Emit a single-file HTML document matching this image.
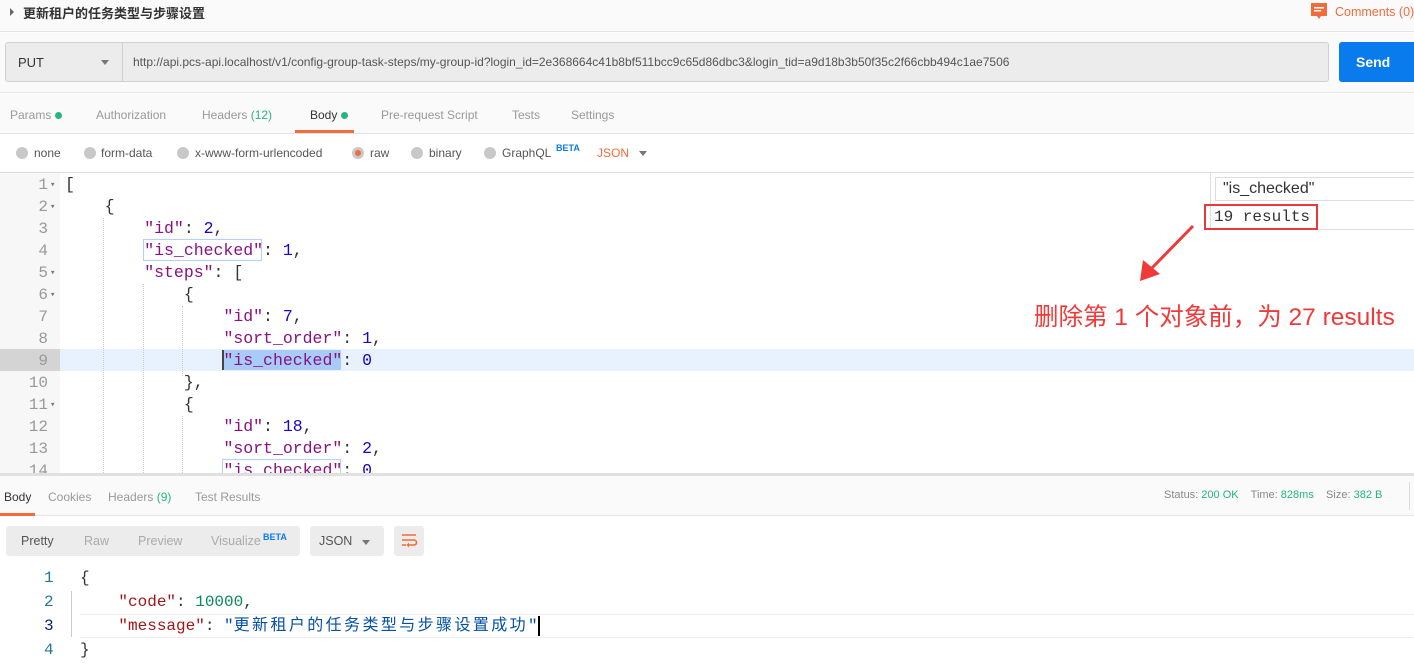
<!DOCTYPE html>
<html><head><meta charset="utf-8"><style>
*{margin:0;padding:0;box-sizing:border-box}
body{width:1414px;height:665px;overflow:hidden;background:#fff;font-family:"Liberation Sans","Noto Sans CJK SC",sans-serif;position:relative;color:#333}
.abs{position:absolute}
.mono{font-family:"Liberation Mono","DejaVu Sans Mono","Noto Sans CJK SC",monospace}
.tab{position:absolute;top:108px;font-size:12px;color:#999}
.radio{position:absolute;top:147px;width:12px;height:12px;border-radius:50%;background:#c8c8c8}
.rl{position:absolute;top:146px;font-size:12px;color:#555}
.ln{position:absolute;left:0;width:48px;text-align:right;font-size:16px;color:#999}
.cl{position:absolute;font-size:16.5px;white-space:pre;color:#333}
.k{color:#881280}.n{color:#1c00cf}
.guide{position:absolute;border-left:1px dotted #ccc}
</style></head><body>
<!-- top bar -->
<div class="abs" style="left:0;top:0;width:1414px;height:32px;background:#fafafa;border-bottom:1px solid #e4e4e4"></div>
<div class="abs" style="left:10px;top:8px;width:0;height:0;border-left:4px solid #666;border-top:4px solid transparent;border-bottom:4px solid transparent"></div>
<div class="abs" style="left:23px;top:3px;font-size:13px;font-weight:bold;color:#333">更新租户的任务类型与步骤设置</div>
<svg class="abs" style="left:1311px;top:3px" width="16" height="17"><rect x="0" y="0" width="16" height="13" fill="#f26b3a"/><polygon points="6,13 10,13 8,16" fill="#f26b3a"/><rect x="3" y="4" width="10" height="1.5" fill="#fff"/><rect x="3" y="7" width="7" height="1.5" fill="#fff"/></svg>
<div class="abs" style="left:1335px;top:5px;font-size:12.5px;color:#f26b3a;white-space:nowrap">Comments (0)</div>
<!-- request row -->
<div class="abs" style="left:0;top:33px;width:1414px;height:60px;background:#fafafa;border-bottom:1px solid #e4e4e4"></div>
<div class="abs" style="left:5px;top:42px;width:1324px;height:40px;background:#ececec;border:1px solid #d0d0d0;border-radius:3px"></div>
<div class="abs" style="left:122px;top:43px;width:1px;height:38px;background:#d0d0d0"></div>
<div class="abs" style="left:18px;top:55px;font-size:13px;color:#333">PUT</div>
<div class="abs" style="left:101px;top:60px;border-top:5px solid #777;border-left:4px solid transparent;border-right:4px solid transparent"></div>
<div class="abs" style="left:133px;top:55px;font-size:12px;color:#555;white-space:nowrap">http://api.pcs-api.localhost/v1/config-group-task-steps/my-group-id?login_id=2e368664c41b8bf511bcc9c65d86dbc3&amp;login_tid=a9d18b3b50f35c2f66cbb494c1ae7506</div>
<div class="abs" style="left:1339px;top:42px;width:80px;height:40px;background:#097bed;border-radius:3px 0 0 3px;color:#fff;font-size:14px;font-weight:bold;line-height:40px;padding-left:17px">Send</div>
<!-- tabs -->
<div class="abs" style="left:0;top:94px;width:1414px;height:40px;background:#fafafa;border-bottom:1px solid #e4e4e4"></div>
<div class="tab" style="left:10px">Params <span style="display:inline-block;width:7px;height:7px;border-radius:50%;background:#26b47f"></span></div>
<div class="tab" style="left:96px">Authorization</div>
<div class="tab" style="left:202px">Headers <span style="color:#26b47f">(12)</span></div>
<div class="tab" style="left:310px;color:#333">Body <span style="display:inline-block;width:7px;height:7px;border-radius:50%;background:#26b47f"></span></div>
<div class="abs" style="left:295px;top:130px;width:59px;height:3px;background:#f26b3a"></div>
<div class="tab" style="left:381px">Pre-request Script</div>
<div class="tab" style="left:512px">Tests</div>
<div class="tab" style="left:571px">Settings</div>
<!-- radios -->
<div class="radio" style="left:16px"></div><div class="rl" style="left:34px">none</div>
<div class="radio" style="left:84px"></div><div class="rl" style="left:101px">form-data</div>
<div class="radio" style="left:177px"></div><div class="rl" style="left:195px">x-www-form-urlencoded</div>
<div class="radio" style="left:352px;background:#f26b3a;border:3px solid #c8c8c8"></div><div class="rl" style="left:370px">raw</div>
<div class="radio" style="left:411px"></div><div class="rl" style="left:429px">binary</div>
<div class="radio" style="left:484px"></div><div class="rl" style="left:502px">GraphQL</div>
<div class="abs" style="left:556px;top:143px;font-size:9px;font-weight:bold;color:#097bed">BETA</div>
<div class="abs" style="left:597px;top:146px;font-size:12px;color:#f26b3a">JSON</div>
<div class="abs" style="left:639px;top:151px;border-top:5px solid #777;border-left:4px solid transparent;border-right:4px solid transparent"></div>
<!-- editor -->
<div class="abs" style="left:0;top:172px;width:1414px;height:1px;background:#ddd"></div>
<div class="abs" style="left:0;top:173px;width:60px;height:300px;background:#f7f7f7"></div>
<div class="abs" style="left:0;top:349px;width:60px;height:22px;background:#d4d4d4"></div>
<div class="abs" style="left:60px;top:349px;width:1354px;height:22px;background:#e8f2fe"></div>
<div class="guide" style="left:103px;top:218px;height:255px"></div>
<div class="guide" style="left:143px;top:284px;height:189px"></div>
<div class="guide" style="left:182px;top:306px;height:70px"></div>
<div class="guide" style="left:182px;top:416px;height:57px"></div>
<div class="abs" style="left:143px;top:239px;width:119px;height:22px;border:1px solid #b5d0f5"></div>
<div class="abs" style="left:222px;top:350px;width:119px;height:20px;background:#a9cbf7;border-left:2px solid #444"></div>
<div class="abs" style="left:222px;top:459px;width:119px;height:14px;border:1px solid #b5d0f5;border-bottom:none"></div>
<div class="mono" style="position:absolute;top:173px;left:0;width:1414px;height:300px;overflow:hidden">
<div class="ln" style="top:3px">1</div><div class="ln" style="top:25px">2</div><div class="ln" style="top:47px">3</div><div class="ln" style="top:69px">4</div><div class="ln" style="top:91px">5</div><div class="ln" style="top:113px">6</div><div class="ln" style="top:135px">7</div><div class="ln" style="top:157px">8</div><div class="ln" style="top:179px">9</div><div class="ln" style="top:201px">10</div><div class="ln" style="top:223px">11</div><div class="ln" style="top:245px">12</div><div class="ln" style="top:267px">13</div><div class="ln" style="top:289px">14</div>
<div style="position:absolute;left:50px;font-size:9px;color:#777;top:7px">▾</div>
<div style="position:absolute;left:50px;font-size:9px;color:#777;top:29px">▾</div>
<div style="position:absolute;left:50px;font-size:9px;color:#777;top:95px">▾</div>
<div style="position:absolute;left:50px;font-size:9px;color:#777;top:117px">▾</div>
<div style="position:absolute;left:50px;font-size:9px;color:#777;top:227px">▾</div>
<div class="cl" style="top:2px;left:65px">[</div>
<div class="cl" style="top:24px;left:65px">    {</div>
<div class="cl" style="top:46px;left:65px">        <span class="k">"id"</span>: <span class="n">2</span>,</div>
<div class="cl" style="top:68px;left:65px">        <span class="k">"is_checked"</span>: <span class="n">1</span>,</div>
<div class="cl" style="top:90px;left:65px">        <span class="k">"steps"</span>: [</div>
<div class="cl" style="top:112px;left:65px">            {</div>
<div class="cl" style="top:134px;left:65px">                <span class="k">"id"</span>: <span class="n">7</span>,</div>
<div class="cl" style="top:156px;left:65px">                <span class="k">"sort_order"</span>: <span class="n">1</span>,</div>
<div class="cl" style="top:178px;left:65px">                <span class="k">"is_checked"</span>: <span class="n">0</span></div>
<div class="cl" style="top:200px;left:65px">            },</div>
<div class="cl" style="top:222px;left:65px">            {</div>
<div class="cl" style="top:244px;left:65px">                <span class="k">"id"</span>: <span class="n">18</span>,</div>
<div class="cl" style="top:266px;left:65px">                <span class="k">"sort_order"</span>: <span class="n">2</span>,</div>
<div class="cl" style="top:288px;left:65px">                <span class="k">"is_checked"</span>: <span class="n">0</span></div>
</div>
<!-- search -->
<div class="abs" style="left:1210px;top:173px;width:204px;height:57px;background:#fff;border-left:1px solid #ddd;border-bottom:1px solid #ddd"></div>
<div class="abs" style="left:1215px;top:177px;width:199px;height:24px;border:1px solid #ddd;border-right:none;font-size:16px;padding-left:7px;line-height:22px">"is_checked"</div>
<div class="abs mono" style="left:1204px;top:204px;width:114px;height:26px;border:2px solid #e83a3a;font-size:16px;line-height:22px;padding-left:8px">19 results</div>
<svg class="abs" style="left:1138px;top:224px" width="60" height="60"><line x1="55" y1="2" x2="12" y2="46" stroke="#f03a3a" stroke-width="3"/><polygon points="2,57 5,36 22,50" fill="#f03a3a"/></svg>
<div class="abs" style="left:1034px;top:298px;font-size:24.5px;color:#f03a3a;white-space:nowrap">删除第 1 个对象前，为 27 results</div>
<!-- response -->
<div class="abs" style="left:0;top:473px;width:1414px;height:3px;background:#e0e0e0"></div>
<div class="abs" style="left:0;top:476px;width:1414px;height:40px;background:#fafafa;border-bottom:1px solid #e4e4e4"></div>
<div class="abs" style="left:4px;top:490px;font-size:12px;color:#333">Body</div>
<div class="abs" style="left:0;top:513px;width:35px;height:3px;background:#f26b3a"></div>
<div class="abs" style="left:48px;top:490px;font-size:12px;color:#999">Cookies</div>
<div class="abs" style="left:108px;top:490px;font-size:12px;color:#999">Headers <span style="color:#26b47f">(9)</span></div>
<div class="abs" style="left:195px;top:490px;font-size:12px;color:#999">Test Results</div>
<div class="abs" style="left:1164px;top:489px;font-size:11px;color:#888;white-space:nowrap">Status: <span style="color:#26b47f">200 OK</span>&nbsp;&nbsp;&nbsp; Time: <span style="color:#26b47f">828ms</span>&nbsp;&nbsp;&nbsp; Size: <span style="color:#26b47f">382 B</span></div>
<div class="abs" style="left:1409px;top:482px;width:1px;height:28px;background:#ddd"></div>
<div class="abs" style="left:6px;top:526px;width:294px;height:30px;background:#ececec;border-radius:3px"></div>
<div class="abs" style="left:21px;top:534px;font-size:12.5px;color:#555">Pretty</div>
<div class="abs" style="left:84px;top:534px;font-size:12.5px;color:#aaa">Raw</div>
<div class="abs" style="left:138px;top:534px;font-size:12.5px;color:#aaa">Preview</div>
<div class="abs" style="left:211px;top:534px;font-size:12.5px;color:#aaa">Visualize</div>
<div class="abs" style="left:263px;top:532px;font-size:9px;font-weight:bold;color:#097bed">BETA</div>
<div class="abs" style="left:310px;top:526px;width:74px;height:30px;background:#ececec;border-radius:3px"></div>
<div class="abs" style="left:319px;top:534px;font-size:12.5px;color:#555">JSON</div>
<div class="abs" style="left:362px;top:540px;border-top:5px solid #777;border-left:4px solid transparent;border-right:4px solid transparent"></div>
<div class="abs" style="left:394px;top:526px;width:30px;height:30px;background:#ececec;border-radius:3px"></div>
<svg class="abs" style="left:400px;top:532px" width="18" height="18"><path d="M2 3h14M2 8h12a2.5 2.5 0 0 1 0 5H9M2 13h4" stroke="#f26b3a" stroke-width="1.6" fill="none"/><polygon points="9,10.5 6.5,13 9,15.5" fill="#f26b3a"/></svg>
<div class="abs" style="left:80px;top:614px;width:1334px;height:24px;border-top:1px solid #eee;border-bottom:1px solid #eee"></div>
<div class="abs" style="left:71px;top:591px;width:1px;height:46px;background:#ccc"></div>
<div class="mono abs" style="left:0;top:566px;width:1414px;font-size:16px;line-height:24px;color:#333">
<div style="position:absolute;left:44px;top:0;color:#237893">1</div><div style="position:absolute;left:44px;top:24px;color:#237893">2</div><div style="position:absolute;left:44px;top:48px;color:#0b216f">3</div><div style="position:absolute;left:44px;top:72px;color:#237893">4</div>
<div style="position:absolute;left:80px;top:0;white-space:pre">{</div>
<div style="position:absolute;left:80px;top:24px;white-space:pre">    <span style="color:#a31515">"code"</span>: <span style="color:#09885a">10000</span>,</div>
<div style="position:absolute;left:80px;top:48px;white-space:pre">    <span style="color:#a31515">"message"</span>: <span style="color:#0451a5">"<span style="letter-spacing:2.4px">更新租户的任务类型与步骤设置成功</span>"</span></div>
<div style="position:absolute;left:538px;top:50px;width:2px;height:20px;background:#000"></div>
<div style="position:absolute;left:80px;top:72px;white-space:pre">}</div>
</div>
</body></html>
